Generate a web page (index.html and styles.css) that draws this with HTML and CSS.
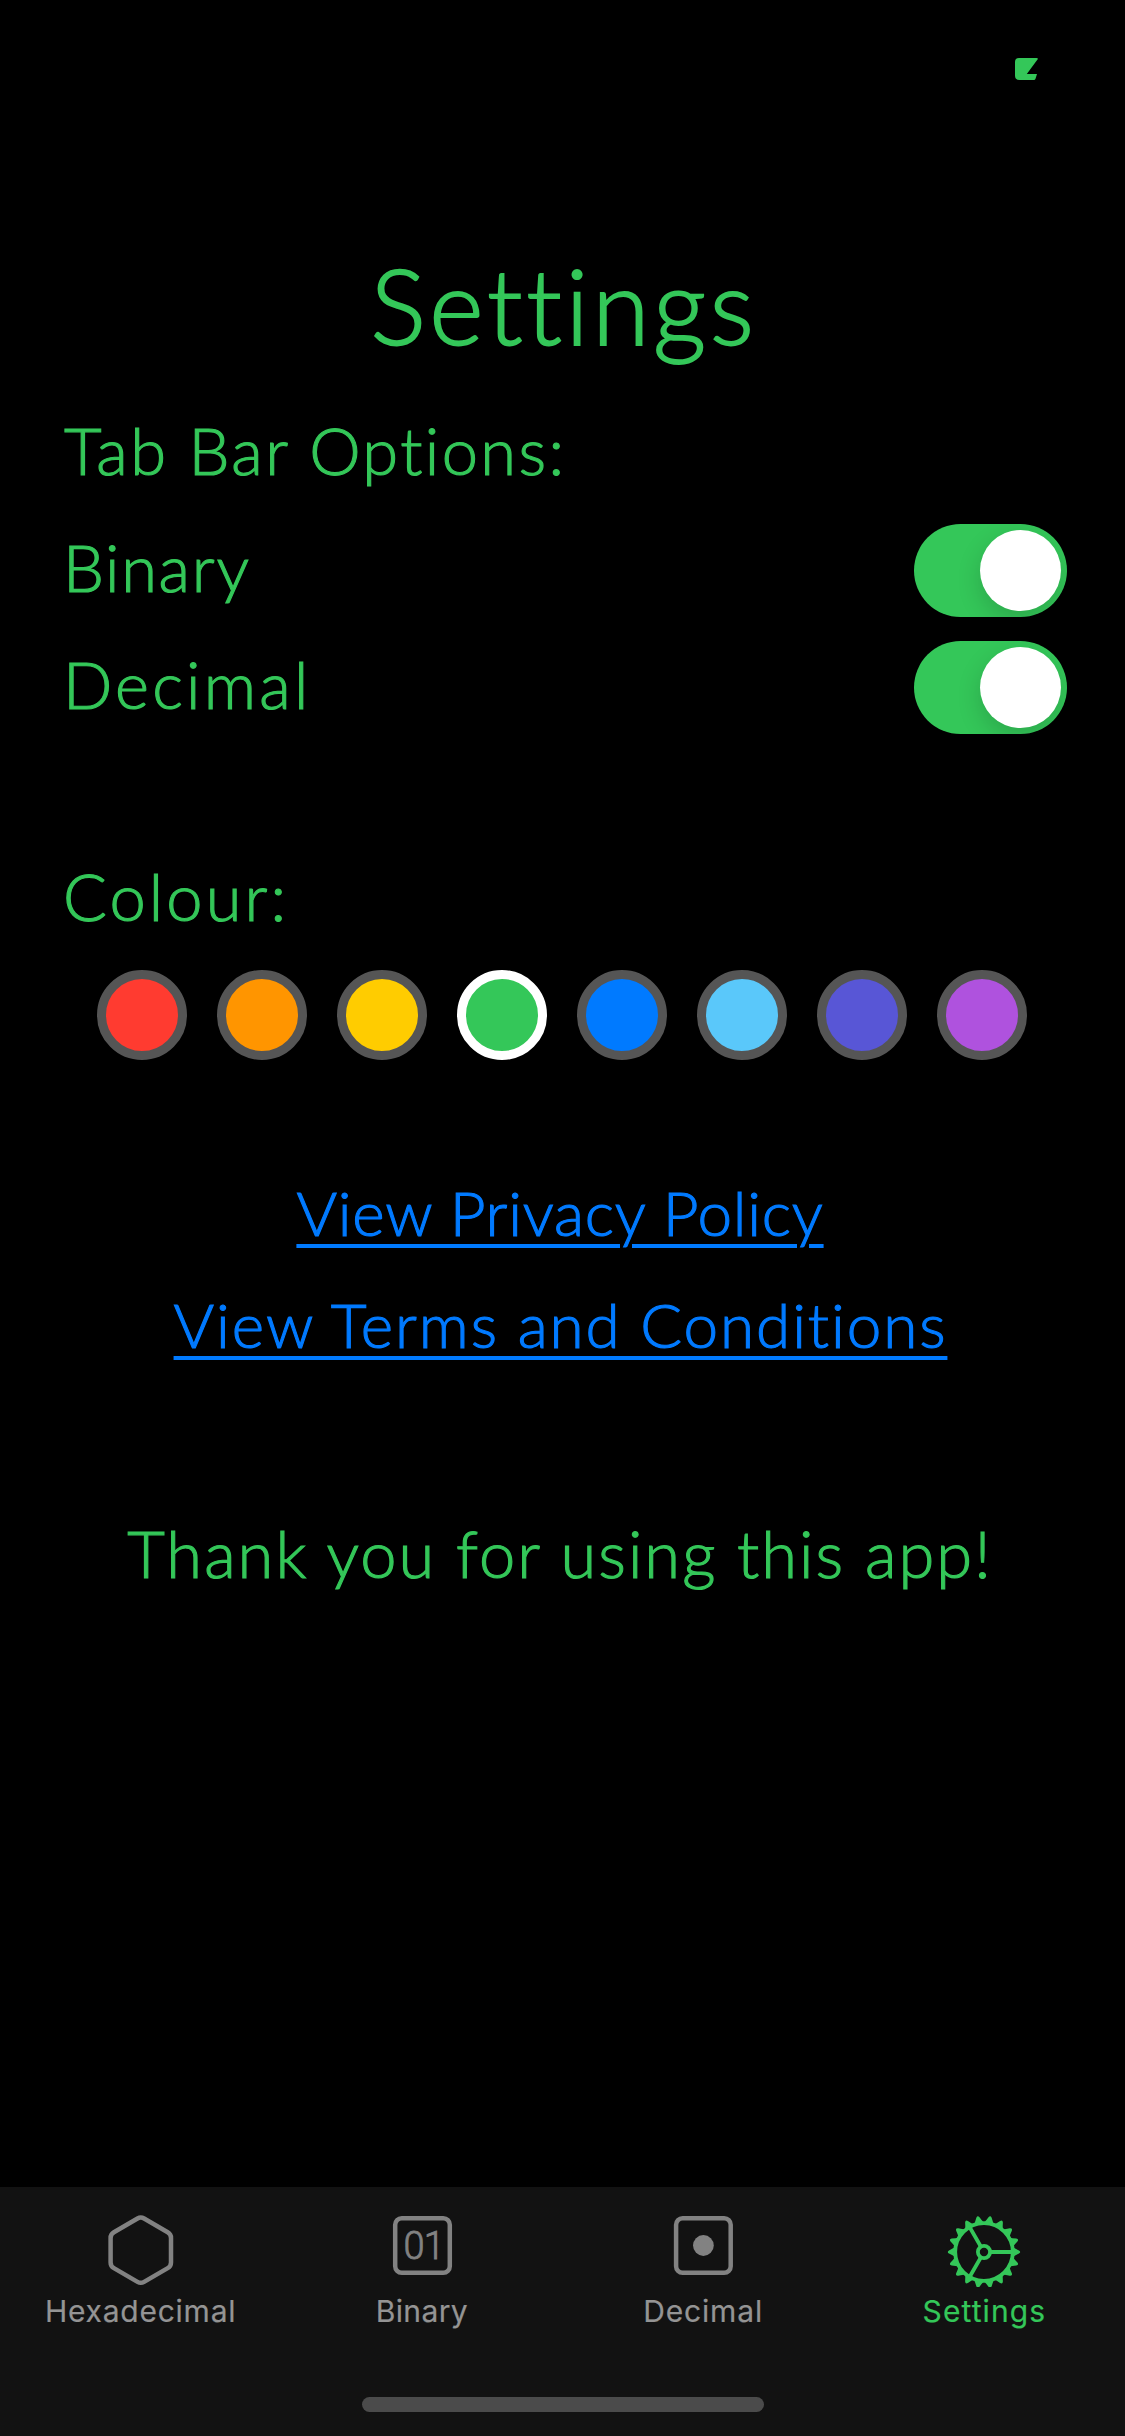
FILE: index.html
```
<!DOCTYPE html>
<html lang="en">
<head>
<meta charset="utf-8">
<title>Settings</title>
<link rel="stylesheet" href="styles.css">
</head>
<body>
<div class="screen">
  <header class="status-bar">
    <svg class="status-icon" width="23" height="22" viewBox="0 0 23 22"><path d="M4 0H21.500Q23.600 0 22.500 1.600L11.800 16H22L20.600 20.500Q20.200 22 18.800 22H4.500Q0 22 0 17.500V4Q0 0 4 0Z"/></svg>
  </header>
  <main class="content">
    <h1 class="title">Settings</h1>

    <section class="options">
      <h2 class="label label-options">Tab Bar Options:</h2>
      <div class="option-row">
        <span class="label label-binary">Binary</span>
        <span class="switch"><span class="knob"></span></span>
      </div>
      <div class="option-row">
        <span class="label label-decimal">Decimal</span>
        <span class="switch"><span class="knob"></span></span>
      </div>
    </section>

    <section class="colours">
      <h2 class="label label-colour">Colour:</h2>
      <div class="swatches">
        <span class="swatch red"></span>
        <span class="swatch orange"></span>
        <span class="swatch yellow"></span>
        <span class="swatch green selected"></span>
        <span class="swatch blue"></span>
        <span class="swatch teal"></span>
        <span class="swatch indigo"></span>
        <span class="swatch purple"></span>
      </div>
    </section>

    <nav class="links">
      <a class="link privacy" href="#privacy">View Privacy Policy</a>
      <a class="link terms" href="#terms">View Terms and Conditions</a>
    </nav>

    <p class="thanks">Thank you for using this app!</p>
  </main>

  <footer class="tab-bar">
    <div class="tabs">
      <div class="tab">
        <svg class="tab-icon" width="80" height="80" viewBox="0 0 80 80"><path d="M36.700 11.300Q40 9.400 43.300 11.300L66.900 25.100Q70.200 27 70.200 30.800V55.200Q70.200 59 66.900 60.900L43.300 74.700Q40 76.600 36.700 74.700L13.100 60.900Q9.800 59 9.800 55.200V30.800Q9.800 27 13.100 25.100Z" transform="translate(-.2 .2)"/></svg>
        <span class="tab-label hex">Hexadecimal</span>
      </div>
      <div class="tab">
        <svg class="tab-icon" width="80" height="80" viewBox="0 0 80 80"><rect x="13.200" y="11.200" width="54.600" height="54.600" rx="6.500"/><text class="digits" y="51.800" x="21.400 41.700">01</text></svg>
        <span class="tab-label binary">Binary</span>
      </div>
      <div class="tab">
        <svg class="tab-icon" width="80" height="80" viewBox="0 0 80 80"><rect x="13.100" y="11.200" width="54.600" height="54.600" rx="6.500"/><circle class="dot" cx="40.400" cy="38.500" r="10.400"/></svg>
        <span class="tab-label decimal">Decimal</span>
      </div>
      <div class="tab active">
        <svg class="tab-icon" width="80" height="80" viewBox="-40 -45 80 80">
          <defs><path id="tooth" d="M29 -5Q31 -3.500 35 -1.600Q37.400 0 35 1.600Q31 3.500 29 5Z"/></defs>
          <g class="teeth">
            <use href="#tooth"/><use href="#tooth" transform="rotate(20)"/><use href="#tooth" transform="rotate(40)"/>
            <use href="#tooth" transform="rotate(60)"/><use href="#tooth" transform="rotate(80)"/><use href="#tooth" transform="rotate(100)"/>
            <use href="#tooth" transform="rotate(120)"/><use href="#tooth" transform="rotate(140)"/><use href="#tooth" transform="rotate(160)"/>
            <use href="#tooth" transform="rotate(180)"/><use href="#tooth" transform="rotate(200)"/><use href="#tooth" transform="rotate(220)"/>
            <use href="#tooth" transform="rotate(240)"/><use href="#tooth" transform="rotate(260)"/><use href="#tooth" transform="rotate(280)"/>
            <use href="#tooth" transform="rotate(300)"/><use href="#tooth" transform="rotate(320)"/><use href="#tooth" transform="rotate(340)"/>
          </g>
          <circle r="28.800"/>
          <circle r="6.100"/>
          <path class="spokes" d="M7 0H28M-3.500 6.060L-14 24.250M-3.500 -6.060L-14 -24.250"/>
        </svg>
        <span class="tab-label settings">Settings</span>
      </div>
    </div>
    <div class="home-indicator"></div>
  </footer>
</div>
</body>
</html>
```
FILE: styles.css
```
* { box-sizing: border-box; }

body {
  margin: 0;
  background: #000;
  color: #34c759;
  font-family: Lato, "Open Sans", sans-serif;
  font-weight: 300;
}

.screen {
  display: flex;
  flex-direction: column;
  width: 1125px;
  height: 2436px;
  overflow: hidden;
}

.status-bar {
  display: flex;
  justify-content: flex-end;
  height: 243px;
  padding: 58px 87px 0 0;
}

.status-icon { fill: #34c759; }

.content {
  flex: 1;
  display: flex;
  flex-direction: column;
}

.title {
  margin: 0;
  padding-left: 3px;
  font-size: 104px;
  font-weight: 300;
  line-height: 124px;
  letter-spacing: 3.6px;
  text-align: center;
  -webkit-text-stroke: 1.8px currentColor;
}

.label {
  margin: 0;
  font-size: 65px;
  font-weight: 300;
  line-height: 80px;
  white-space: nowrap;
  -webkit-text-stroke: 1.1px currentColor;
}

.label-options { letter-spacing: 2.39px; }
.label-binary { margin-left: -1px; letter-spacing: 1.7px; }
.label-decimal { margin-left: -1px; letter-spacing: 3.2px; }
.label-colour { margin-left: -1px; letter-spacing: 3.1px; }

.options {
  display: flex;
  flex-direction: column;
  gap: 24px;
  margin-top: 43px;
  padding: 0 58px 0 64px;
}

.options h2 { margin-bottom: 10px; }

.option-row {
  display: flex;
  align-items: center;
  justify-content: space-between;
  height: 93px;
}

.option-row .label { padding-bottom: 8px; }

.switch {
  display: flex;
  justify-content: flex-end;
  width: 153px;
  height: 93px;
  padding: 6px;
  border-radius: 47px;
  background: #34c759;
  overflow: hidden;
}

.knob {
  width: 81px;
  height: 81px;
  border-radius: 50%;
  background: #fff;
  box-shadow: 0 9px 24px rgba(0, 0, 0, .16);
}

.colours {
  margin-top: 122px;
  padding-left: 64px;
}

.swatches {
  display: flex;
  gap: 30px;
  margin-top: 34px;
  padding-left: 33px;
}

.swatch {
  width: 90px;
  height: 90px;
  border: 9px solid #555;
  border-radius: 50%;
}

.swatch.selected { border-color: #fff; }

.red { background: #ff3b30; }
.orange { background: #ff9500; }
.yellow { background: #ffcc00; }
.green { background: #34c759; }
.blue { background: #007aff; }
.teal { background: #5ac8fa; }
.indigo { background: #5856d6; }
.purple { background: #af52de; }

.links {
  display: flex;
  flex-direction: column;
  align-items: center;
  gap: 32px;
  margin-top: 112px;
}

.link {
  color: #007aff;
  font-size: 62px;
  line-height: 80px;
  white-space: nowrap;
  text-decoration: underline;
  text-decoration-thickness: 4px;
  text-underline-offset: 8px;
  -webkit-text-stroke: 1.1px currentColor;
}

.privacy {
  margin-right: 5px;
  letter-spacing: .75px;
}

.terms {
  margin-right: 4px;
  letter-spacing: 1.9px;
}

.thanks {
  margin: 149px 0 0;
  padding-right: 5px;
  font-size: 65px;
  line-height: 80px;
  letter-spacing: 2.03px;
  text-align: center;
  white-space: nowrap;
  -webkit-text-stroke: 1.1px currentColor;
}

.tab-bar {
  display: flex;
  flex-direction: column;
  align-items: center;
  justify-content: space-between;
  height: 249px;
  padding: 20px 0 24px;
  background: #121212;
}

.tabs {
  display: grid;
  grid-template-columns: repeat(4, 1fr);
  width: 100%;
}

.tab {
  display: flex;
  flex-direction: column;
  align-items: center;
  color: #949494;
}

.tab-icon {
  display: block;
  fill: none;
  stroke: #828282;
  stroke-width: 4.5;
}

.tab-icon .digits {
  fill: #828282;
  stroke-width: .8;
  font: 300 38px Roboto, sans-serif;
}

.tab-icon .dot {
  fill: #828282;
  stroke: none;
}

.tab.active { color: #34c759; }

.active .tab-icon {
  stroke: #34c759;
  stroke-width: 3.8;
}

.tab-icon .teeth {
  fill: #34c759;
  stroke: none;
}

.tab-label {
  margin-top: 6px;
  font: 400 30px/36px Inter, "Liberation Sans", sans-serif;
  -webkit-text-stroke: .2px currentColor;
}

.hex { letter-spacing: .75px; }
.binary { letter-spacing: .35px; }
.decimal { letter-spacing: .85px; }
.settings { letter-spacing: 1.1px; }

.home-indicator {
  width: 402px;
  height: 15px;
  border-radius: 8px;
  background: #4b4b4b;
}
```
